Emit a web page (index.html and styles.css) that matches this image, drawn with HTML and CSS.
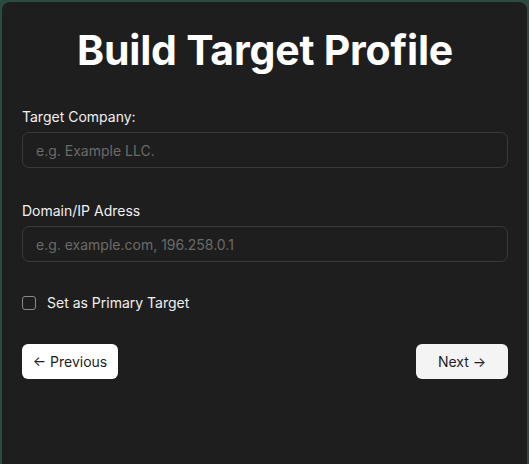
FILE: index.html
```html
<!DOCTYPE html>
<html>
<head>
<meta charset="utf-8">
<link rel="stylesheet" href="styles.css">
</head>
<body>
<div class="card">
  <h1 class="title">Build Target Profile</h1>
  <div class="field">
    <label class="label">Target Company:</label>
    <input class="input" type="text" placeholder="e.g. Example LLC.">
  </div>
  <div class="field">
    <label class="label">Domain/IP Adress</label>
    <input class="input" type="text" placeholder="e.g. example.com, 196.258.0.1">
  </div>
  <label class="check">
    <span class="box"></span>
    <span>Set as Primary Target</span>
  </label>
  <div class="actions">
    <button class="btn btn-prev">&larr; Previous</button>
    <button class="btn btn-next">Next &rarr;</button>
  </div>
</div>
</body>
</html>
```

FILE: styles.css
```css
html, body {
  margin: 0;
  padding: 0;
  height: 100%;
}
body {
  background: #2a4b40;
  font-family: Inter, "Noto Sans", sans-serif;
  overflow: hidden;
}
.card {
  margin: 2px 2px 0 2px;
  background: #1e1e1e;
  border-radius: 8px 8px 0 0;
  padding: 20px 19px 0 20px;
  height: calc(100vh - 2px);
  box-sizing: border-box;
  display: flex;
  flex-direction: column;
  color: #f2f2f2;
}
.title {
  margin: 0;
  text-align: center;
  font-size: 41px;
  font-weight: 700;
  line-height: 56px;
  color: #ffffff;
  letter-spacing: -0.2px;
}
.field {
  display: flex;
  flex-direction: column;
}
.field:first-of-type {
  margin-top: 30px;
}
.field + .field {
  margin-top: 34px;
}
.label {
  font-size: 14px;
  line-height: 18px;
  color: #f0f0f0;
  margin-bottom: 6px;
}
.input {
  height: 36px;
  box-sizing: border-box;
  background: #1e1e1e;
  border: 1px solid #3a3a3a;
  border-radius: 7px;
  padding: 0 13px;
  font-family: inherit;
  font-size: 14px;
  color: #f0f0f0;
  outline: none;
}
.input::placeholder {
  color: #6a6a6a;
}
.check {
  display: flex;
  align-items: center;
  gap: 11px;
  margin-top: 32px;
  font-size: 14px;
  line-height: 18px;
  color: #f0f0f0;
}
.box {
  width: 12px;
  height: 12px;
  border: 1px solid #8a8a8a;
  border-radius: 3px;
}
.actions {
  display: flex;
  justify-content: space-between;
  margin-top: 32px;
}
.btn {
  height: 35px;
  border: none;
  border-radius: 6px;
  font-family: inherit;
  font-size: 14px;
  color: #1e1e1e;
  padding: 0;
  white-space: nowrap;
}
.btn-prev {
  background: #ffffff;
  width: 96px;
}
.btn-next {
  background: #f4f4f4;
  width: 92px;
}
```
